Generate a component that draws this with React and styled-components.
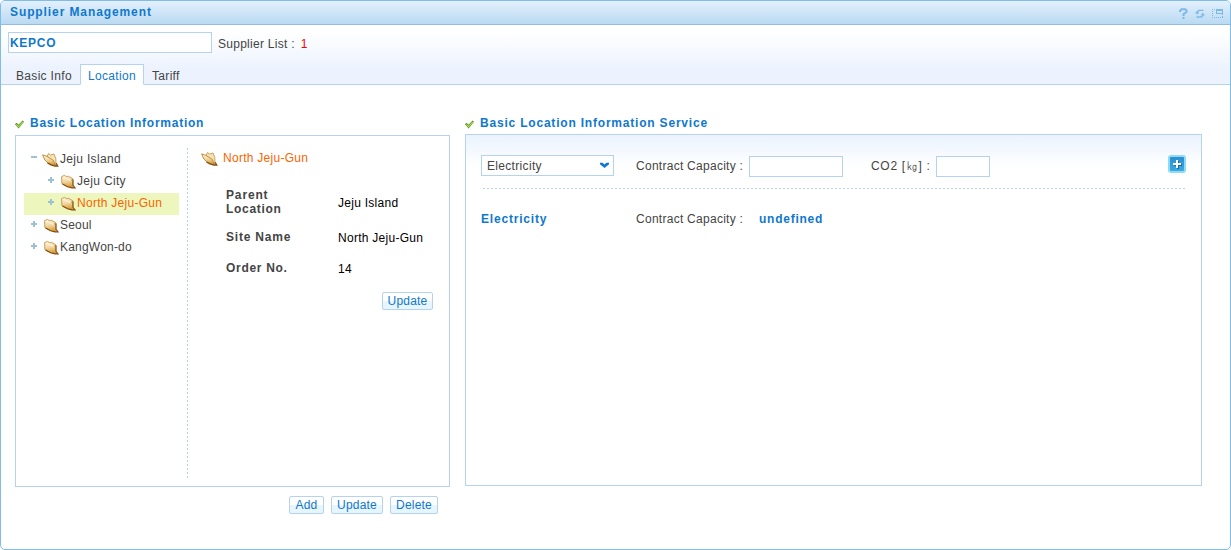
import React from "react";
import styled, { createGlobalStyle, css } from "styled-components";

const line = "#b3d3ee";
const blue = "#0f78cd";
const orange = "#fa6400";

const GlobalStyle = createGlobalStyle`
  *, *::before, *::after { box-sizing: border-box; }
  body { margin: 0; background: #fff; }
  body, input, button {
    font-family: "Liberation Sans", Arial, sans-serif;
    font-size: 12px;
    line-height: 14px;
    color: #444;
  }
  h1, h2, dl, dt, dd, ul { margin: 0; padding: 0; font-size: 12px; }
  ul { list-style: none; }
  svg { display: block; flex: none; }
`;

const Text = styled.span`
  white-space: pre;
  letter-spacing: ${(p) => p.$track ?? 0.32}px;
  color: ${(p) => p.$color || "#444"};
  font-weight: ${(p) => (p.$bold ? 700 : 400)};
`;

const Frame = styled.div`
  width: 1231px;
  height: 550px;
  border: 1px solid #7fbde6;
  border-radius: 5px;
  background: #fff;
  overflow: hidden;
`;

const TitleBar = styled.header`
  height: 24px;
  display: flex;
  align-items: flex-start;
  justify-content: space-between;
  padding: 4px 7px 0 9px;
  border-bottom: 1px solid #94bbe8;
  background: linear-gradient(#e3f0fc, #b9daf2);
`;

const TitleIcons = styled.div`
  display: flex;
  gap: 7px;
  padding-top: 3px;
`;

const SearchArea = styled.div`
  height: 60px;
  border-bottom: 1px solid ${line};
  background: linear-gradient(#fff 10%, #ecf3fe 75%);
`;

const SearchRow = styled.div`
  display: flex;
  padding: 7px 0 0 7px;
  gap: 6px;
`;

const Field = styled.input`
  width: ${(p) => p.$w}px;
  height: 21px;
  padding: 0 0 0 1px;
  border: 1px solid ${line};
  border-radius: 0;
  background: #fff;
  outline: 0;
  color: ${blue};
  font-weight: 700;
  letter-spacing: 0.7px;
`;

const ListCount = styled.div`
  display: flex;
  gap: 6px;
  padding-top: 5px;
`;

const Tabs = styled.nav`
  display: flex;
  margin-top: 11px;
  padding-left: 7px;
`;

const Tab = styled.div`
  height: 21px;
  width: ${(p) => p.$w}px;
  padding: 4px 0 0 7px;
  border: 1px solid transparent;
  ${(p) =>
    p.$active &&
    css`
      background: #fff;
      border-color: ${line};
      border-bottom-color: #fff;
    `}
`;

const Content = styled.main`
  display: flex;
  gap: 15px;
  padding: 31px 0 0 14px;
`;

const LeftColumn = styled.section`
  width: 435px;
`;

const RightColumn = styled.section`
  width: 737px;
`;

const SectionTitle = styled.h2`
  display: flex;
  height: ${(p) => p.$h}px;
  gap: 6px;
  svg { margin-top: 4px; }
`;

const LocationPanel = styled.div`
  height: 352px;
  display: flex;
  border: 1px solid ${line};
`;

const Tree = styled.ul`
  width: 171px;
  padding: 13px 0 0 8px;
`;

const TreeRow = styled.li`
  height: 22px;
  width: 155px;
  display: flex;
  padding-left: ${(p) => 7 + p.$depth * 17}px;
  background: ${(p) => (p.$selected ? "#edf7bd" : "transparent")};
  > svg:first-child { margin: 6px ${(p) => (p.$open ? 5 : 7)}px 0 0; }
  > svg + svg { margin-top: 3px; }
  ${Text} { padding-top: 3px; margin-left: 1px; }
`;

const Divider = styled.div`
  width: 1px;
  height: 331px;
  margin-top: 12px;
  background: repeating-linear-gradient(${line} 0 2px, transparent 2px 4px);
`;

const Detail = styled.div`
  flex: 1;
  padding: 15px 16px 0 13px;
`;

const DetailHead = styled.div`
  display: flex;
  gap: 5px;
  height: 37px;
`;

const Properties = styled.dl`
  padding-left: 25px;
`;

const Property = styled.div`
  display: flex;
  align-items: center;
  height: ${(p) => p.$h}px;
  dt { width: 112px; display: flex; flex-direction: column; }
  dd { display: flex; padding-top: 2px; }
`;

const Button = styled.button`
  width: ${(p) => p.$w}px;
  height: 18px;
  padding: 1px 0 0;
  border: 1px solid ${line};
  border-radius: 2px;
  background: linear-gradient(#fff 50%, #e7f5fe 50%);
  display: flex;
  justify-content: center;
`;

const ButtonRow = styled.div`
  display: flex;
  justify-content: flex-end;
  gap: 7px;
  padding: ${(p) => p.$pad};
`;

const ServicePanel = styled.div`
  height: 352px;
  padding: 20px 15px 0 15px;
  border: 1px solid ${line};
  background: linear-gradient(#eaf3fe, #fff 32px);
`;

const ServiceForm = styled.div`
  display: flex;
  height: 33px;
`;

const Select = styled.div`
  width: 133px;
  height: 21px;
  margin-right: 22px;
  padding: 3px 4px 0 5px;
  display: flex;
  justify-content: space-between;
  border: 1px solid ${line};
  background: #fff;
  svg { margin-top: 3px; }
`;

const FieldGroup = styled.div`
  display: flex;
  width: ${(p) => p.$w}px;
  margin-right: 28px;
  justify-content: space-between;
  padding-top: 1px;
  ${Text} { padding-top: 3px; }
`;

const AddButton = styled.button`
  width: 18px;
  height: 18px;
  margin-left: auto;
  padding: 2px;
  border: 2px solid #8edbf8;
  border-radius: 3px;
  background: linear-gradient(#2a8fd0, #3da9df);
  svg { width: 10px; height: 10px; }
`;

const DashedRule = styled.div`
  height: 1px;
  margin-left: 2px;
  background: repeating-linear-gradient(90deg, ${line} 0 2px, transparent 2px 4px);
`;

const ServiceRow = styled.div`
  display: flex;
  padding-top: 23px;
`;

const ServiceName = styled.div`
  width: 155px;
`;

const ServiceLabel = styled.div`
  width: 123px;
`;

const HelpIcon = () => (
  <svg width="9" height="11" viewBox="0 0 9 11" fill="none" stroke="#7cb9e8" strokeWidth="2">
    <path d="M1 4V2.8L2.5 1.2H6.2L7.5 2.4V4L4.5 6.2V8" />
    <path d="M3.5 10h2" />
  </svg>
);

const RefreshIcon = () => (
  <svg width="10" height="11" viewBox="0 0 10 11" fill="none" stroke="#7cb9e8" strokeWidth="1.4">
    <path d="M2 5.4V4L3.7 2.4H8.5" />
    <path d="M8 6V7.4L6.3 9H1.5" />
    <path d="M0 4.2H4.4L2.2 6.6ZM5.6 7.2H10L7.8 4.8Z" fill="#7cb9e8" stroke="none" />
  </svg>
);

const WindowIcon = () => (
  <svg width="11" height="10" viewBox="0 0 11 10" shapeRendering="crispEdges" fill="none" stroke="#7cb9e8">
    <path d="M.5 1V10M0 1.5H4M0 9.5H11M10.5 6V10" strokeDasharray="1 1" />
    <path d="M4.5 1.5H10.5V5.5H4.5ZM4 2.5H11" />
  </svg>
);

const CheckIcon = () => (
  <svg width="9" height="9" viewBox="0 0 9 9">
    <path d="M0 4.3L1.5 2.8 3.5 4.8 7.6.4 9 1.8 3.6 8.5Z" fill="#518a1c" />
    <path d="M1.2 4.4L3.6 6.7 7.8 1.9" stroke="#a8e052" strokeWidth="1.1" fill="none" />
  </svg>
);

const ToggleIcon = ({ open }) => (
  <svg width="6" height="6" viewBox="0 0 6 6" shapeRendering="crispEdges" fill="#9dc0d4">
    <path d={open ? "M0 1H6V3H0Z" : "M0 2H2V0H4V2H6V4H4V6H2V4H0Z"} />
  </svg>
);

const FolderGradient = ({ id }) => (
  <linearGradient id={id} x1=".3" y1="0" x2=".45" y2="1">
    <stop offset="0" stopColor="#fff3d8" />
    <stop offset=".5" stopColor="#f0d7a4" />
    <stop offset="1" stopColor="#d99c2c" />
  </linearGradient>
);

const OpenFolder = ({ id }) => (
  <svg width="17" height="15" viewBox="0 0 17 15">
    <defs><FolderGradient id={id} /></defs>
    <path d="M5 4.5L6.5 1.5 8.5 3 12 2 13.8 6.5 14 13Z" fill="#f5e2b8" stroke="#c39a55" strokeWidth=".9" />
    <path d="M.6 2.8L5 4.4 11.5 8.5 13.3 13.6 6.5 11.4 2.8 8Z" fill={`url(#${id})`} stroke="#b98733" strokeWidth=".9" />
    <path d="M5.5 11L9 12.8 13 14H15.7L14.2 11.2" stroke="#84490f" strokeWidth="1.3" fill="none" />
  </svg>
);

const ClosedFolder = ({ id }) => (
  <svg width="15" height="15" viewBox="0 0 15 15">
    <defs><FolderGradient id={id} /></defs>
    <path d="M.6 2.6L3.5 1.4 5.5 2.6 7.5 2.3 11.8 4.8V13.5L6 12.3 .8 9.4Z" fill={`url(#${id})`} stroke="#c3964a" strokeWidth=".9" />
    <path d="M1.8 3.2L9.8 6.6" stroke="#fff6dd" strokeWidth="1" fill="none" />
    <path d="M9.9 6.6L11.8 5" stroke="#b98a3d" strokeWidth=".8" fill="none" />
    <path d="M1.5 10L6.5 12.8 11 13.9H14L12 11.3V5.5" stroke="#84490f" strokeWidth="1.1" fill="none" />
  </svg>
);

const ChevronIcon = () => (
  <svg width="9" height="6" viewBox="0 0 9 6">
    <path d="M0 .8H2.6L4.5 2.4 6.4.8H9V2.2L4.5 6 0 2.2Z" fill={blue} />
  </svg>
);

const PlusIcon = () => (
  <svg viewBox="0 0 10 10" shapeRendering="crispEdges">
    <path d="M5 2H7V5H10V7H7V10H5V7H2V5H5Z" fill="#1a6ca5" />
    <path d="M4 1H6V4H9V6H6V9H4V6H1V4H4Z" fill="#fff" />
  </svg>
);

const locations = [
  { name: "Jeju Island", depth: 0, open: true, track: 0.32 },
  { name: "Jeju City", depth: 1, track: 0.32 },
  { name: "North Jeju-Gun", depth: 1, selected: true, track: 0.27 },
  { name: "Seoul", depth: 0, track: 0.2 },
  { name: "KangWon-do", depth: 0, track: 0.2 },
];

const properties = [
  { label: [["Parent", 0.85], ["Location", 0.7]], value: "Jeju Island", h: 28 },
  { label: [["Site Name", 0.8]], value: "North Jeju-Gun", h: 41 },
  { label: [["Order No.", 0.7]], value: "14", h: 21 },
];

export default function App() {
  return (
    <Frame>
      <GlobalStyle />
      <TitleBar>
        <Text as="h1" $bold $color={blue} $track={0.9}>Supplier Management</Text>
        <TitleIcons><HelpIcon /><RefreshIcon /><WindowIcon /></TitleIcons>
      </TitleBar>
      <SearchArea>
        <SearchRow>
          <Field $w={204} defaultValue="KEPCO" />
          <ListCount>
            <Text $track={0.27}>Supplier List :</Text>
            <Text $color="#f00">1</Text>
          </ListCount>
        </SearchRow>
        <Tabs>
          <Tab $w={72}><Text>Basic Info</Text></Tab>
          <Tab $w={64} $active><Text $color={blue}>Location</Text></Tab>
          <Tab $w={50}><Text>Tariff</Text></Tab>
        </Tabs>
      </SearchArea>
      <Content>
        <LeftColumn>
          <SectionTitle $h={19}>
            <CheckIcon />
            <Text $bold $color={blue} $track={0.75}>Basic Location Information</Text>
          </SectionTitle>
          <LocationPanel>
            <Tree>
              {locations.map((l, i) => (
                <TreeRow key={l.name} $depth={l.depth} $selected={l.selected} $open={l.open}>
                  <ToggleIcon open={l.open} />
                  {l.open ? <OpenFolder id={`tree-${i}`} /> : <ClosedFolder id={`tree-${i}`} />}
                  <Text $track={l.track} $color={l.selected ? orange : undefined}>{l.name}</Text>
                </TreeRow>
              ))}
            </Tree>
            <Divider />
            <Detail>
              <DetailHead>
                <OpenFolder id="detail" />
                <Text $color={orange} $track={0.27}>North Jeju-Gun</Text>
              </DetailHead>
              <Properties>
                {properties.map((p) => (
                  <Property key={p.value} $h={p.h}>
                    <dt>
                      {p.label.map(([word, track]) => (
                        <Text key={word} $bold $track={track}>{word}</Text>
                      ))}
                    </dt>
                    <dd><Text $color="#000" $track={0.27}>{p.value}</Text></dd>
                  </Property>
                ))}
              </Properties>
              <ButtonRow $pad="14px 0 0">
                <Button $w={51}><Text $color={blue} $track={0.2}>Update</Text></Button>
              </ButtonRow>
            </Detail>
          </LocationPanel>
          <ButtonRow $pad="9px 12px 0 0">
            <Button $w={35}><Text $color={blue} $track={0.2}>Add</Text></Button>
            <Button $w={52}><Text $color={blue} $track={0.2}>Update</Text></Button>
            <Button $w={48}><Text $color={blue} $track={0.2}>Delete</Text></Button>
          </ButtonRow>
        </LeftColumn>
        <RightColumn>
          <SectionTitle $h={18}>
            <CheckIcon />
            <Text $bold $color={blue} $track={0.8}>Basic Location Information Service</Text>
          </SectionTitle>
          <ServicePanel>
            <ServiceForm>
              <Select>
                <Text>Electricity</Text>
                <ChevronIcon />
              </Select>
              <FieldGroup $w={207}>
                <Text $track={0.27}>Contract Capacity :</Text>
                <Field $w={94} />
              </FieldGroup>
              <FieldGroup $w={119}>
                <Text $track={0.7}>CO2 [㎏] :</Text>
                <Field $w={54} />
              </FieldGroup>
              <AddButton><PlusIcon /></AddButton>
            </ServiceForm>
            <DashedRule />
            <ServiceRow>
              <ServiceName><Text $bold $color={blue} $track={0.8}>Electricity</Text></ServiceName>
              <ServiceLabel><Text $track={0.27}>Contract Capacity :</Text></ServiceLabel>
              <Text $bold $color={blue} $track={0.75}>undefined</Text>
            </ServiceRow>
          </ServicePanel>
        </RightColumn>
      </Content>
    </Frame>
  );
}
